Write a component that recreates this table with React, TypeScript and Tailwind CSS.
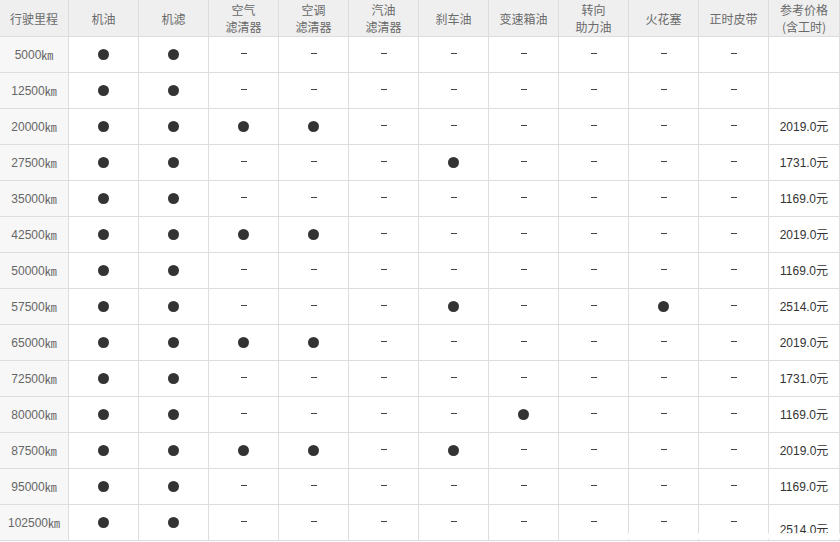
const HEADERS: string[][] = [
  ['行驶里程'],
  ['机油'],
  ['机滤'],
  ['空气', '滤清器'],
  ['空调', '滤清器'],
  ['汽油', '滤清器'],
  ['刹车油'],
  ['变速箱油'],
  ['转向', '助力油'],
  ['火花塞'],
  ['正时皮带'],
  ['参考价格', '(含工时)'],
]

// 1 = 更换, 0 = 不需要
const ROWS: { km: string; items: number[]; price: string }[] = [
  { km: '5000', items: [1, 1, 0, 0, 0, 0, 0, 0, 0, 0], price: '' },
  { km: '12500', items: [1, 1, 0, 0, 0, 0, 0, 0, 0, 0], price: '' },
  { km: '20000', items: [1, 1, 1, 1, 0, 0, 0, 0, 0, 0], price: '2019.0元' },
  { km: '27500', items: [1, 1, 0, 0, 0, 1, 0, 0, 0, 0], price: '1731.0元' },
  { km: '35000', items: [1, 1, 0, 0, 0, 0, 0, 0, 0, 0], price: '1169.0元' },
  { km: '42500', items: [1, 1, 1, 1, 0, 0, 0, 0, 0, 0], price: '2019.0元' },
  { km: '50000', items: [1, 1, 0, 0, 0, 0, 0, 0, 0, 0], price: '1169.0元' },
  { km: '57500', items: [1, 1, 0, 0, 0, 1, 0, 0, 1, 0], price: '2514.0元' },
  { km: '65000', items: [1, 1, 1, 1, 0, 0, 0, 0, 0, 0], price: '2019.0元' },
  { km: '72500', items: [1, 1, 0, 0, 0, 0, 0, 0, 0, 0], price: '1731.0元' },
  { km: '80000', items: [1, 1, 0, 0, 0, 0, 1, 0, 0, 0], price: '1169.0元' },
  { km: '87500', items: [1, 1, 1, 1, 0, 1, 0, 0, 0, 0], price: '2019.0元' },
  { km: '95000', items: [1, 1, 0, 0, 0, 0, 0, 0, 0, 0], price: '1169.0元' },
  { km: '102500', items: [1, 1, 0, 0, 0, 0, 0, 0, 0, 0], price: '2514.0元' },
]

const cell = 'flex items-center justify-center border-b border-r border-[#dddddd]'

export default function App() {
  return (
    <div className="relative w-[840px] bg-white" style={{ fontFamily: '"Liberation Sans", "Noto Sans CJK SC", sans-serif' }}>
      <div className="grid grid-cols-[69px_repeat(10,70px)_71px] grid-rows-[37px_repeat(14,36px)]">
        {HEADERS.map((h, i) => (
          <div
            key={i}
            className={`${cell} flex-col bg-[#efefef] text-center text-[12px] leading-[17px] text-[#6a6a6a]`}
            style={{ fontFamily: '"Noto Sans CJK SC", sans-serif' }}
          >
            {h.map((line) => (
              <span key={line}>{line}</span>
            ))}
          </div>
        ))}

        {ROWS.map((r, ri) => (
          <Row key={r.km} row={r} last={ri === ROWS.length - 1} />
        ))}
      </div>

      {/* faded watermark band at the bottom right */}
      <div className="absolute left-[600px] top-[533px] h-[6px] w-[240px] bg-white/90" />
    </div>
  )
}

function Row({ row, last }: { row: (typeof ROWS)[number]; last: boolean }) {
  return (
    <>
      <div className={`${cell} bg-[#f7f7f7] text-[12px] text-[#666666]`}>
        {row.km}
        <span style={{ fontFamily: '"Noto Sans CJK SC", sans-serif' }}>㎞</span>
      </div>
      {row.items.map((v, i) => (
        <div key={i} className={cell}>
          {v ? (
            <span className="h-[11px] w-[11px] rounded-full bg-[#333333]" />
          ) : (
            <span className="mb-[2px] h-px w-[6px] bg-[#444444]" />
          )}
        </div>
      ))}
      <div className={`${cell} text-[12px] text-[#333333] ${last ? 'pt-[14px]' : ''}`}>{row.price}</div>
    </>
  )
}
